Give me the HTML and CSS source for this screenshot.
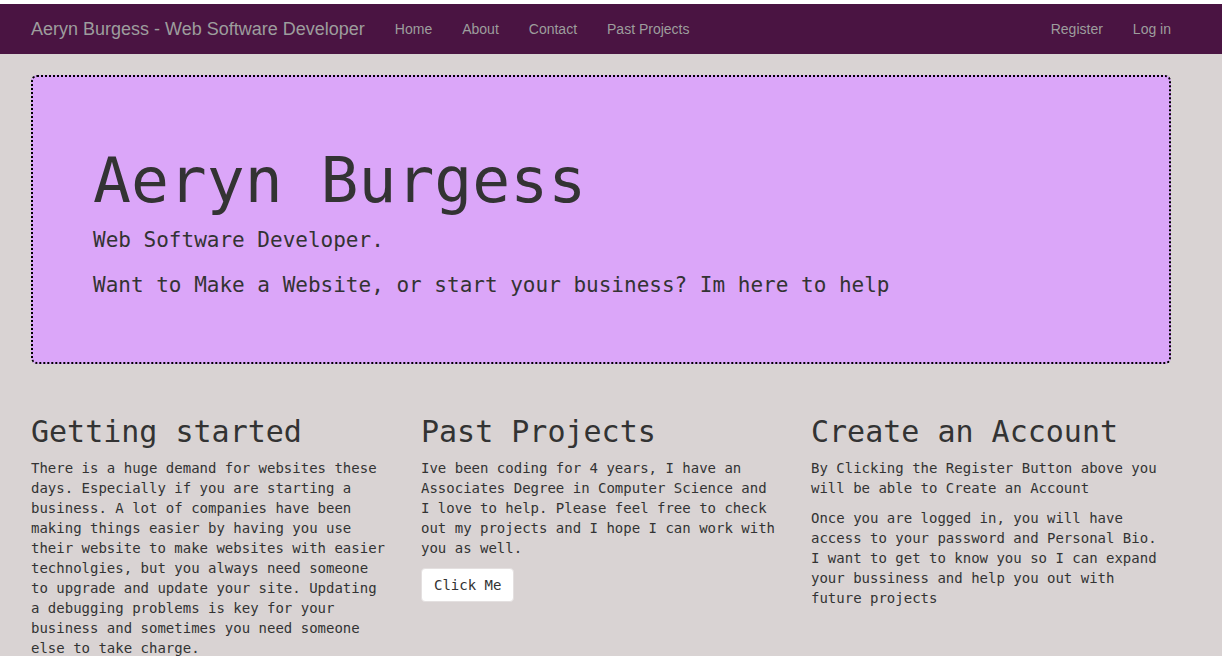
FILE: index.html
```html
<!DOCTYPE html>
<html lang="en">
<head>
<meta charset="utf-8">
<title>Aeryn Burgess - Web Software Developer</title>
<link rel="stylesheet" href="styles.css">
</head>
<body>
<nav class="navbar">
  <div class="container nav-inner">
    <a class="brand" href="#">Aeryn Burgess - Web Software Developer</a>
    <ul class="nav">
      <li><a href="#">Home</a></li>
      <li><a href="#">About</a></li>
      <li><a href="#">Contact</a></li>
      <li><a href="#">Past Projects</a></li>
    </ul>
    <ul class="nav nav-right">
      <li><a href="#">Register</a></li>
      <li><a href="#">Log in</a></li>
    </ul>
  </div>
</nav>
<main class="container">
  <section class="jumbotron">
    <h1>Aeryn Burgess</h1>
    <p>Web Software Developer.</p>
    <p>Want to Make a Website, or start your business? Im here to help</p>
  </section>
  <div class="row">
    <div class="col">
      <h2>Getting started</h2>
      <p>There is a huge demand for websites these days. Especially if you are starting a business. A lot of companies have been making things easier by having you use their website to make websites with easier technolgies, but you always need someone to upgrade and update your site. Updating a debugging problems is key for your business and sometimes you need someone else to take charge.</p>
    </div>
    <div class="col">
      <h2>Past Projects</h2>
      <p>Ive been coding for 4 years, I have an Associates Degree in Computer Science and I love to help. Please feel free to check out my projects and I hope I can work with you as well.</p>
      <p><a class="btn" href="#">Click Me</a></p>
    </div>
    <div class="col">
      <h2>Create an Account</h2>
      <p>By Clicking the Register Button above you will be able to Create an Account</p>
      <p>Once you are logged in, you will have access to your password and Personal Bio. I want to get to know you so I can expand your bussiness and help you out with future projects</p>
    </div>
  </div>
</main>
</body>
</html>
```

FILE: styles.css
```css
* { box-sizing: border-box; }
html { background: #ffffff; }
body {
  margin: 0;
  border-top: 4px solid #ffffff;
  background: #d9d3d3;
  font-family: "DejaVu Sans Mono", monospace;
  font-size: 14px;
  line-height: 20px;
  color: #333333;
  min-height: 652px;
}
.container {
  width: 1140px;
  margin-left: 31px;
}
.navbar {
  background: #4a1442;
  height: 50px;
  margin-bottom: 21px;
  font-family: "Liberation Sans", Arial, sans-serif;
}
.nav-inner {
  display: flex;
  align-items: center;
  height: 50px;
}
.brand {
  color: #9d9d9d;
  font-size: 18px;
  line-height: 20px;
  text-decoration: none;
  padding: 15px 15px 15px 0;
}
.nav {
  display: flex;
  list-style: none;
  margin: 0;
  padding: 0;
}
.nav a {
  display: block;
  padding: 15px;
  color: #9d9d9d;
  text-decoration: none;
  font-size: 14px;
  line-height: 20px;
}
.nav-right {
  margin-left: auto;
  margin-right: -15px;
}
.jumbotron {
  background: #dba6f9;
  border: 2px dotted #000000;
  border-radius: 6px;
  padding: 48px 60px 47px;
  margin-bottom: 31px;
}
.jumbotron h1 {
  font-size: 63px;
  line-height: 1.1;
  font-weight: normal;
  margin: 21px 0 10px;
}
.jumbotron p {
  font-size: 21px;
  line-height: 30px;
  margin: 0 0 15px;
}
.row {
  display: grid;
  grid-template-columns: repeat(3, 358px);
  column-gap: 32px;
}
.col h2 {
  font-size: 30px;
  line-height: 33px;
  font-weight: normal;
  margin: 20px 0 10px;
}
.col p {
  margin: 0 0 10px;
}
.btn {
  display: inline-block;
  background: #ffffff;
  color: #333333;
  border: 1px solid #e4e0e0;
  border-radius: 4px;
  padding: 6px 12px;
  text-decoration: none;
  font-size: 14px;
  line-height: 20px;
}
```
